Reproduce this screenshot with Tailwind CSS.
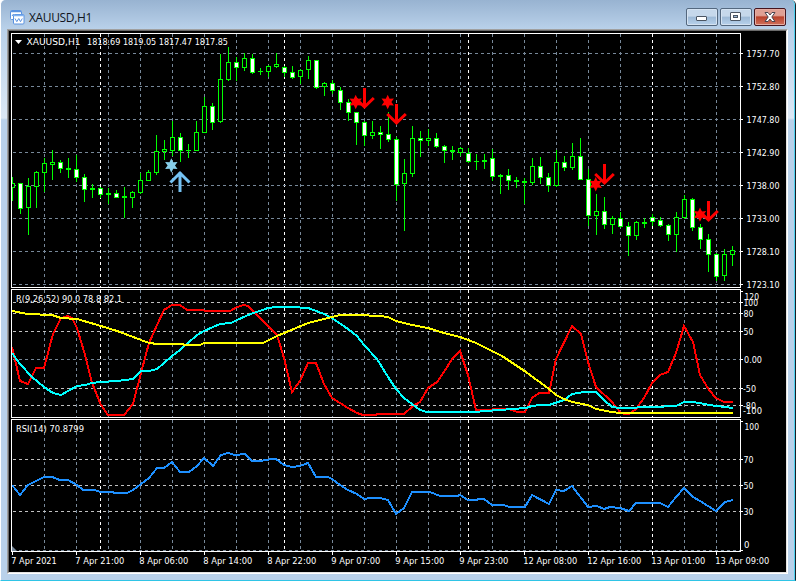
<!DOCTYPE html>
<html lang="en">
<head>
  <meta charset="UTF-8" />
  <meta name="viewport" content="width=device-width, initial-scale=1.0" />
  <title>XAUUSD,H1</title>
  <script src="https://cdn.jsdelivr.net/npm/@tailwindcss/browser@4"></script>
</head>

<body class="bg-white w-[798px] h-[581px] overflow-hidden font-['DejaVu_Sans_Condensed','DejaVu_Sans',sans-serif]">
  <div class="w-[796px] h-[581px] flex flex-col rounded-t-[5px] border-l border-l-white border-r border-r-[#1a1f26] border-b border-b-[#2fc4e6] bg-[#b9d1ea]">
    <!-- Title bar -->
    <header class="h-[29px] shrink-0 flex items-start bg-linear-to-b from-[#98b3d1] to-[#b9d1ea] rounded-t-[5px] border-r border-r-[#4fd2f0]">
      <svg class="mt-[10px] ml-[9px] shrink-0" width="15" height="15" viewBox="0 0 15 15" fill="none">
        <rect x="0.5" y="0.5" width="11" height="9" rx="1" fill="#fff" stroke="#5b93e0" />
        <path d="M1 1.5h10" stroke="#5b93e0" stroke-width="1.5" />
        <path d="M2 6l1.500-2 1.500 2 1.500-2" stroke="#5b93e0" />
        <rect x="3.500" y="4.500" width="10.500" height="9.500" rx="1" fill="#fff" stroke="#5b93e0" />
        <path d="M4 5.500h10" stroke="#7fb0f0" stroke-width="1.500" />
        <path d="M5 8.500l1.800 3.200 2-3.200 1.700 3.200 1.800-3.200" stroke="#5b93e0" />
      </svg>
      <span class="mt-[9px] ml-1 font-['Open_Sans','Noto_Sans',sans-serif] text-[12px] leading-[17px] text-[#10151c] tracking-[-0.35px]">XAUUSD,H1</span>
      <div class="ml-auto mr-2 mt-2 flex gap-[2px]">
        <button class="w-8 h-[18px] flex items-center justify-center rounded-[2px] border border-[#54687f] bg-linear-to-b from-[#c6d8eb] from-45% via-[#9db9d6] via-50% to-[#b8d2ec] shadow-[inset_0_0_0_1px_#d5e3f2]">
          <svg class="mt-[2px]" width="12" height="6" viewBox="0 0 12 6"><rect x="0.5" y="1.5" width="10" height="4" rx="0.5" fill="#fff" stroke="#4b5563" /></svg>
        </button>
        <button class="w-8 h-[18px] flex items-center justify-center rounded-[2px] border border-[#54687f] bg-linear-to-b from-[#c6d8eb] from-45% via-[#9db9d6] via-50% to-[#b8d2ec] shadow-[inset_0_0_0_1px_#d5e3f2]">
          <svg width="12" height="10" viewBox="0 0 12 10"><rect x="0.5" y="0.5" width="10" height="8" rx="0.5" fill="#fff" stroke="#4b5563" /><rect x="3.5" y="3.5" width="4" height="2" fill="#9db9d6" stroke="#4b5563" /></svg>
        </button>
        <button class="w-8 h-[18px] flex items-center justify-center rounded-[2px] border border-[#45151f] bg-linear-to-b from-[#e0a094] from-40% via-[#b9412b] via-50% to-[#d0705c] shadow-[inset_0_0_0_1px_#e5ada3]">
          <svg width="12" height="10" viewBox="0 0 12 10"><path d="M1 .5h3L6 3l2-2.500h3L7.800 5 11 9.500H8L6 7 4 9.500H1L4.200 5z" fill="#fff" stroke="#4b4550" /></svg>
        </button>
      </div>
    </header>

    <!-- Frame and client area -->
    <div class="flex-1 min-h-0 flex pb-[6px] pl-[6px] pr-[6px] border-r border-r-[#4fd2f0] bg-linear-to-b from-[#b9d1ea] via-[#dce8f5] via-[89px] to-[#b9d1ea] to-[91px]">
      <main class="w-[781px] h-[545px] shrink-0 bg-black border-t border-l border-t-[#a0a0a0] border-l-[#a0a0a0] border-r border-b border-r-white border-b-white">
        <div class="h-full flex flex-col pt-[2px] pl-[2px] border-t border-l border-t-[#696969] border-l-[#696969] border-r border-b border-r-[#e3e3e3] border-b-[#e3e3e3]">
          <svg id="price" class="block shrink-0" width="775" height="256" viewBox="11 33 775 256"></svg>
          <svg id="wpr" class="block shrink-0" width="775" height="130" viewBox="11 289 775 130"></svg>
          <svg id="rsi" class="block shrink-0" width="775" height="153" viewBox="11 419 775 153"></svg>
        </div>
      </main>
    </div>
  </div>

  <script>
    const GRID = '#778899';
    const LEVEL = '#c0c0c0';
    const LEFT = 12, RIGHT = 740, STEP = 8;

    // high, body top, body bottom, low, type (u = hollow, d = filled, x = doji)
    const candles = [
      [177,183,188,201,'u'], [183,183,209,214,'d'], [178,186,208,235,'u'], [171,172,187,208,'u'], [158,163,173,192,'u'],
      [150,162,165,180,'u'], [160,162,169,173,'d'], [158,168,170,178,'x'], [155,169,178,182,'d'], [174,177,190,202,'d'],
      [184,188,190,198,'x'], [187,188,195,198,'d'], [188,193,195,204,'x'], [190,193,198,198,'d'], [187,196,198,218,'x'],
      [191,192,198,208,'u'], [173,180,193,194,'u'], [170,172,181,181,'u'], [135,151,173,175,'u'], [140,149,152,160,'u'],
      [121,137,151,156,'u'], [133,137,151,162,'d'], [144,150,151,158,'x'], [121,132,151,151,'u'], [97,106,133,133,'u'],
      [103,106,123,130,'d'], [54,79,122,123,'u'], [47,62,80,81,'u'], [57,62,68,81,'d'], [53,58,68,71,'u'],
      [54,58,73,74,'d'], [68,71,72,75,'x'], [65,66,72,77,'u'], [53,64,67,68,'u'], [66,67,73,77,'d'],
      [66,72,78,79,'d'], [69,70,77,84,'u'], [56,60,70,79,'u'], [60,60,88,89,'d'], [82,83,87,96,'u'],
      [80,83,91,94,'d'], [87,90,103,110,'d'], [99,102,113,121,'d'], [112,112,123,145,'d'], [121,122,136,146,'d'],
      [121,132,136,139,'u'], [126,132,135,149,'d'], [112,134,140,142,'d'], [137,139,185,201,'d'], [159,173,184,231,'u'],
      [126,138,174,177,'u'], [131,138,141,157,'d'], [129,138,141,146,'u'], [133,138,147,148,'d'], [145,146,151,163,'d'],
      [146,150,152,160,'x'], [147,148,153,156,'u'], [148,153,162,163,'d'], [154,161,162,170,'x'], [154,160,162,169,'x'],
      [149,158,177,181,'d'], [174,175,177,194,'x'], [169,175,181,190,'d'], [177,180,182,188,'x'], [178,181,183,204,'x'],
      [158,166,183,185,'u'], [157,166,178,184,'d'], [173,177,186,192,'d'], [150,162,186,187,'u'], [156,162,168,171,'d'],
      [143,156,168,170,'u'], [138,156,180,180,'d'], [169,179,216,226,'d'], [194,211,216,235,'u'], [197,211,225,229,'d'],
      [216,218,225,234,'u'], [212,218,227,228,'d'], [222,226,236,256,'d'], [221,222,236,240,'u'], [218,222,224,228,'x'],
      [214,217,222,226,'d'], [217,220,226,227,'d'], [224,225,235,241,'d'], [212,217,235,252,'u'], [195,199,218,219,'u'],
      [198,199,228,231,'d'], [224,227,240,249,'d'], [234,239,255,272,'d'], [253,254,277,281,'d'], [249,254,276,281,'u'],
      [246,250,255,266,'u']
    ];

    const red = '12,347 20,381 28,384 36,368 44,368 53,334 61,318 68,316 72,318 77,328 85,355 92,383 101,405 108,415 124,415 133,404 141,373 149,343 157,325 164,310 172,305 180,305 187,310 200,310 208,311 230,311 237,307 244,305 248,306 260,318 277,335 284,358 292,392 300,381 308,363 316,363 324,384 332,398 340,403 348,408 357,413 363,415 375,415 378,414 404,414 413,406 420,402 428,388 437,382 444,372 452,359 460,351 468,375 476,410 508,409 518,412 525,412 532,398 539,393 549,393 556,359 572,326 581,334 588,362 596,387 612,402 620,412 624,414 629,414 636,409 644,398 652,383 660,375 668,372 676,353 684,326 693,342 700,375 709,390 716,398 724,402 733,402';
    const cyan = '12,353 20,364 32,377 44,387 53,393 61,395 68,391 77,386 85,385 92,383 101,382 117,381 133,379 141,371 149,371 157,369 164,363 172,356 180,350 197,335 204,331 220,324 231,323 237,320 253,313 260,311 268,308 277,307 292,307 308,308 324,314 332,318 348,329 357,336 364,345 377,359 388,377 396,389 404,398 420,410 427,412 476,412 484,411 500,410 526,408 532,406 540,405 549,405 564,400 572,394 584,392 596,392 604,400 612,407 620,408 635,408 639,407 652,407 676,406 684,402 692,402 700,403 709,405 725,407 733,408';
    const yellow = '12,311 28,314 52,315 61,318 77,319 101,326 117,331 133,337 149,343 158,344 180,344 187,345 200,345 204,343 263,343 277,336 308,323 324,319 340,315 357,315 380,316 388,317 396,321 412,325 428,328 444,333 460,337 476,343 502,356 526,372 549,389 556,395 564,399 572,402 588,405 596,409 612,412 620,413 733,413';
    const rsi = '12,485 20,495 28,485 36,481 44,477 52,477 60,480 68,480 77,485 83,490 95,490 100,492 112,492 115,493 127,493 133,490 141,484 149,478 157,468 164,468 172,462 180,472 189,472 197,466 204,458 213,466 221,455 228,453 235,455 245,454 252,461 260,461 272,459 276,459 284,465 292,467 300,466 308,463 316,477 328,477 332,479 340,485 348,490 357,494 364,499 370,498 380,498 388,500 396,514 404,508 412,492 430,492 440,496 457,496 460,495 468,500 475,500 480,499 484,499 492,505 503,505 510,507 525,507 532,495 549,504 556,490 564,491 572,486 588,507 597,506 604,509 610,507 620,508 629,511 636,503 660,503 668,507 676,497 684,488 693,497 700,501 716,511 725,502 733,500';

    const rect = (x, y, w, h, fill) => `<rect x="${x}" y="${y}" width="${w}" height="${h}" fill="${fill}" shape-rendering="crispEdges"/>`;
    const dash = (x1, y1, x2, y2, color) => `<path d="M${x1} ${y1}L${x2} ${y2}" stroke="${color}" stroke-dasharray="3 3" shape-rendering="crispEdges"/>`;
    const text = (x, y, s, w) => `<text x="${x}" y="${y}" fill="#fff" font-size="9.5"${w ? ` textLength="${w}" lengthAdjust="spacingAndGlyphs"` : ''}>${s}</text>`;
    const curve = (points, color) => `<polyline points="${points}" fill="none" stroke="${color}" stroke-width="2" shape-rendering="crispEdges"/>`;

    function frame(top, bottom) {
      return rect(11, top, 730, 1, '#fff') + rect(11, bottom, 730, 1, '#fff') +
        rect(11, top, 1, bottom - top, '#fff') + rect(RIGHT, top, 1, bottom - top, '#fff');
    }

    function columns(top, bottom) {
      let out = '';
      for (let x = 44; x < RIGHT; x += 32) out += dash(x + 0.5, top, x + 0.5, bottom, GRID);
      for (const x of [100, 284, 468, 652]) out += dash(x + 0.5, top, x + 0.5, bottom, '#fff');
      return out;
    }

    const row = (y, color) => dash(13, y + 0.5, RIGHT, y + 0.5, color) + rect(741, y, 2, 1, '#fff');

    function candle([high, top, bottom, low, type], i) {
      const x = LEFT + i * STEP;
      let out = rect(x, high, 1, low - high, '#0f0') + rect(x - 2, top, 5, bottom - top, '#0f0');
      if (type !== 'x') out += rect(x - 1, top + 1, 3, bottom - top - 2, type === 'u' ? '#000' : '#fff');
      return out;
    }

    function star(cx, cy, color) {
      let p = '';
      for (let i = 0; i < 12; i++) {
        const r = i % 2 ? 3.7 : 7.2, a = (i * 30 - 90) * Math.PI / 180;
        p += `${(cx + r * Math.cos(a)).toFixed(1)},${(cy + r * Math.sin(a)).toFixed(1)} `;
      }
      return `<polygon points="${p}" fill="${color}"/>`;
    }

    const downArrow = (x, y) => `<path d="M${x} ${y}v19M${x - 9.3} ${y + 10}l9.300 9 9.300-9" fill="none" stroke="#f00" stroke-width="3"/>`;

    // Price panel
    const prices = ['1757.70', '1752.80', '1747.80', '1742.90', '1738.00', '1733.00', '1728.10', '1723.10'];
    let out = columns(34, 287);
    prices.forEach((p, i) => { out += row(53 + i * 33, GRID) + text(746.5, 57 + i * 33, p, 33); });
    out += candles.map(candle).join('');
    out += star(171.3, 165.5, '#87ceeb');
    out += '<path d="M180 192v-20M170.500 182.500l9.500-9.500 9.500 9.500" fill="none" stroke="#74c2f4" stroke-width="3"/>';
    out += star(355.7, 102, '#f00') + downArrow(364.5, 88) + star(387.7, 102, '#f00') + downArrow(396.5, 104);
    out += star(595.7, 184.3, '#f00') + downArrow(604.5, 164) + star(700, 214.6, '#f00') + downArrow(708.5, 201);
    out += '<path d="M15 40h7l-3.500 4z" fill="#fff"/>';
    out += text(26.5, 45, 'XAUUSD,H1', 54) + text(87, 45, '1818.69 1819.05 1817.47 1817.85', 141);
    document.getElementById('price').innerHTML = out + frame(33, 287);

    // Oscillator panel
    out = columns(290, 417);
    for (const y of [302, 313, 331, 388, 405]) out += row(y, LEVEL);
    out += row(359, GRID) + rect(741, 291, 2, 1, '#fff');
    out += curve(red, '#f00') + curve(cyan, '#0ff') + curve(yellow, '#ff0');
    out += text(16, 302, 'R(9,26,52) 90.0 78.8 82.1', 106);
    out += text(744.5, 300, '120', 14.5) + text(743.5, 306, '100', 14.5) + text(743.5, 317, '80', 10) + text(743.5, 335, '50', 10);
    out += text(744, 363, '0.00', 18) + text(743, 392, '-50', 13) + text(743, 409, '-80', 13) + text(743, 414, '-100', 19);
    document.getElementById('wpr').innerHTML = out + frame(289, 417);

    // RSI panel with the time axis
    out = columns(420, 551);
    for (const y of [459, 485, 511]) out += row(y, LEVEL);
    out += row(550, GRID) + rect(741, 421, 2, 1, '#fff');
    out += '<path d="M12 546v5h5z" fill="#778899"/>' + curve(rsi, '#1e90ff');
    out += text(16, 432, 'RSI(14) 70.8799', 68);
    out += text(744.5, 430, '100', 14.5) + text(743.5, 463, '70', 10) + text(743.5, 489, '50', 10) + text(743.5, 515, '30', 10) + text(744, 548, '0');
    const times = ['7 Apr 2021', '7 Apr 21:00', '8 Apr 06:00', '8 Apr 14:00', '8 Apr 22:00', '9 Apr 07:00', '9 Apr 15:00', '9 Apr 23:00', '12 Apr 08:00', '12 Apr 16:00', '13 Apr 01:00', '13 Apr 09:00'];
    times.forEach((t, i) => {
      out += rect(12 + i * 64, 552, 1, 3, '#fff') + text(11.3 + i * 64, 564, t, i === 0 ? 45.5 : i < 8 ? 49 : 54);
    });
    document.getElementById('rsi').innerHTML = out + frame(419, 551);
  </script>
</body>
</html>
